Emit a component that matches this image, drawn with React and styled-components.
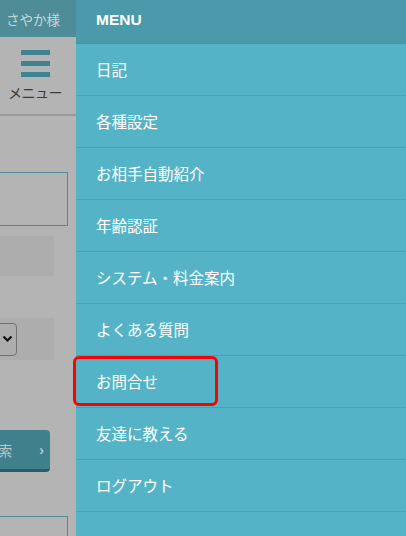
import React from 'react';
import styled, { createGlobalStyle } from 'styled-components';

const GlobalStyle = createGlobalStyle`
  html, body {
    margin: 0;
    padding: 0;
    width: 406px;
    height: 536px;
    overflow: hidden;
    font-family: "Noto Sans CJK JP", "Liberation Sans", sans-serif;
  }
`;

const Screen = styled.div`
  position: relative;
  display: flex;
  width: 406px;
  height: 536px;
  overflow: hidden;
`;

const PageClip = styled.div`
  width: 76px;
  flex-shrink: 0;
  overflow: hidden;
  background: #b4b4b4;
`;

const Page = styled.div`
  width: 406px;
  margin-left: -330px;
  display: flex;
  flex-direction: column;
`;

const TopBar = styled.div`
  height: 37px;
  background: #4e8c97;
  display: flex;
  align-items: center;
  justify-content: flex-end;
  padding-right: 16px;
  color: #c9d6d9;
  font-size: 13.5px;
`;

const NavRow = styled.div`
  height: 77px;
  display: flex;
  justify-content: flex-end;
  border-bottom: 2px solid #9a9a9a;
`;

const MenuButton = styled.div`
  width: 70px;
  margin-right: 6px;
  display: flex;
  flex-direction: column;
  align-items: center;
  padding-top: 13px;
  color: #3a3a3a;
  font-size: 14px;
  line-height: 1;
`;

const Bar = styled.span`
  display: block;
  width: 29px;
  height: 5px;
  background: #3e8391;
  margin-bottom: 6px;
`;

const MenuLabel = styled.span`
  margin-top: 2px;
  letter-spacing: -0.5px;
`;

const Form = styled.div`
  display: flex;
  flex-direction: column;
  align-items: flex-end;
`;

const Field = styled.div`
  width: 300px;
  height: 52px;
  border: 1px solid #4e8b96;
  margin: ${(p) => p.$margin};
`;

const GrayBox = styled.div`
  width: 300px;
  height: ${(p) => p.$h}px;
  background: #adadad;
  margin: ${(p) => p.$margin};
  display: flex;
  align-items: center;
  justify-content: flex-end;
`;

const Select = styled.div`
  width: 200px;
  height: 31px;
  border: 1px solid #707070;
  border-radius: 4px;
  margin-right: 37px;
  display: flex;
  align-items: center;
  justify-content: flex-end;
  padding-right: 3px;
`;

const SearchButton = styled.div`
  width: 200px;
  height: 39px;
  background: #40808d;
  border-bottom: 3px solid #2b5d67;
  border-radius: 4px;
  margin: 70px 26px 0 0;
  display: flex;
  align-items: center;
  justify-content: flex-end;
  gap: 27px;
  padding-right: 6px;
  color: #b4c8cc;
  font-size: 14px;
`;

const Chevron = styled.span`
  font-family: "Liberation Sans", sans-serif;
  font-weight: bold;
  font-size: 14px;
`;

const Drawer = styled.nav`
  flex: 1;
  background: #55b3c8;
  display: flex;
  flex-direction: column;
`;

const DrawerHead = styled.div`
  height: 44px;
  background: #4a9aac;
  border-bottom: 1px solid #4892a3;
  display: flex;
  align-items: center;
  padding-left: 20px;
  padding-bottom: 4px;
  box-sizing: border-box;
  color: #fff;
  font-family: "Liberation Sans", sans-serif;
  font-weight: bold;
  font-size: 15.5px;
  flex-shrink: 0;
`;

const Item = styled.div`
  height: 52px;
  border-bottom: 1px solid #48a1b6;
  display: flex;
  align-items: center;
  padding-left: 20px;
  padding-bottom: 1px;
  box-sizing: border-box;
  color: #fff;
  font-size: 15.5px;
  flex-shrink: 0;
`;

const Highlight = styled.div`
  position: absolute;
  left: 73px;
  top: 356px;
  width: 145px;
  height: 50px;
  border: 3px solid #f00;
  border-radius: 6px;
  box-sizing: border-box;
`;

const items = [
  '日記',
  '各種設定',
  'お相手自動紹介',
  '年齢認証',
  'システム・料金案内',
  'よくある質問',
  'お問合せ',
  '友達に教える',
  'ログアウト',
];

export default function App() {
  return (
    <>
      <GlobalStyle />
      <Screen>
        <PageClip>
          <Page>
            <TopBar>さやか様</TopBar>
            <NavRow>
              <MenuButton>
                <Bar />
                <Bar />
                <Bar />
                <MenuLabel>メニュー</MenuLabel>
              </MenuButton>
            </NavRow>
            <Form>
              <Field $margin="56px 8px 0 0" />
              <GrayBox $h={40} $margin="10px 22px 0 0" />
              <GrayBox $h={42} $margin="42px 22px 0 0">
                <Select>
                  <svg width="11" height="8" viewBox="0 0 11 8">
                    <path d="M1.5 1.5 L5.5 5.5 L9.5 1.5" stroke="#111" strokeWidth="2.2" fill="none" />
                  </svg>
                </Select>
              </GrayBox>
              <SearchButton>
                <span>検索</span>
                <Chevron>›</Chevron>
              </SearchButton>
              <Field $margin="44px 8px 0 0" />
            </Form>
          </Page>
        </PageClip>
        <Drawer>
          <DrawerHead>MENU</DrawerHead>
          {items.map((label) => (
            <Item key={label}>{label}</Item>
          ))}
        </Drawer>
        <Highlight />
      </Screen>
    </>
  );
}
